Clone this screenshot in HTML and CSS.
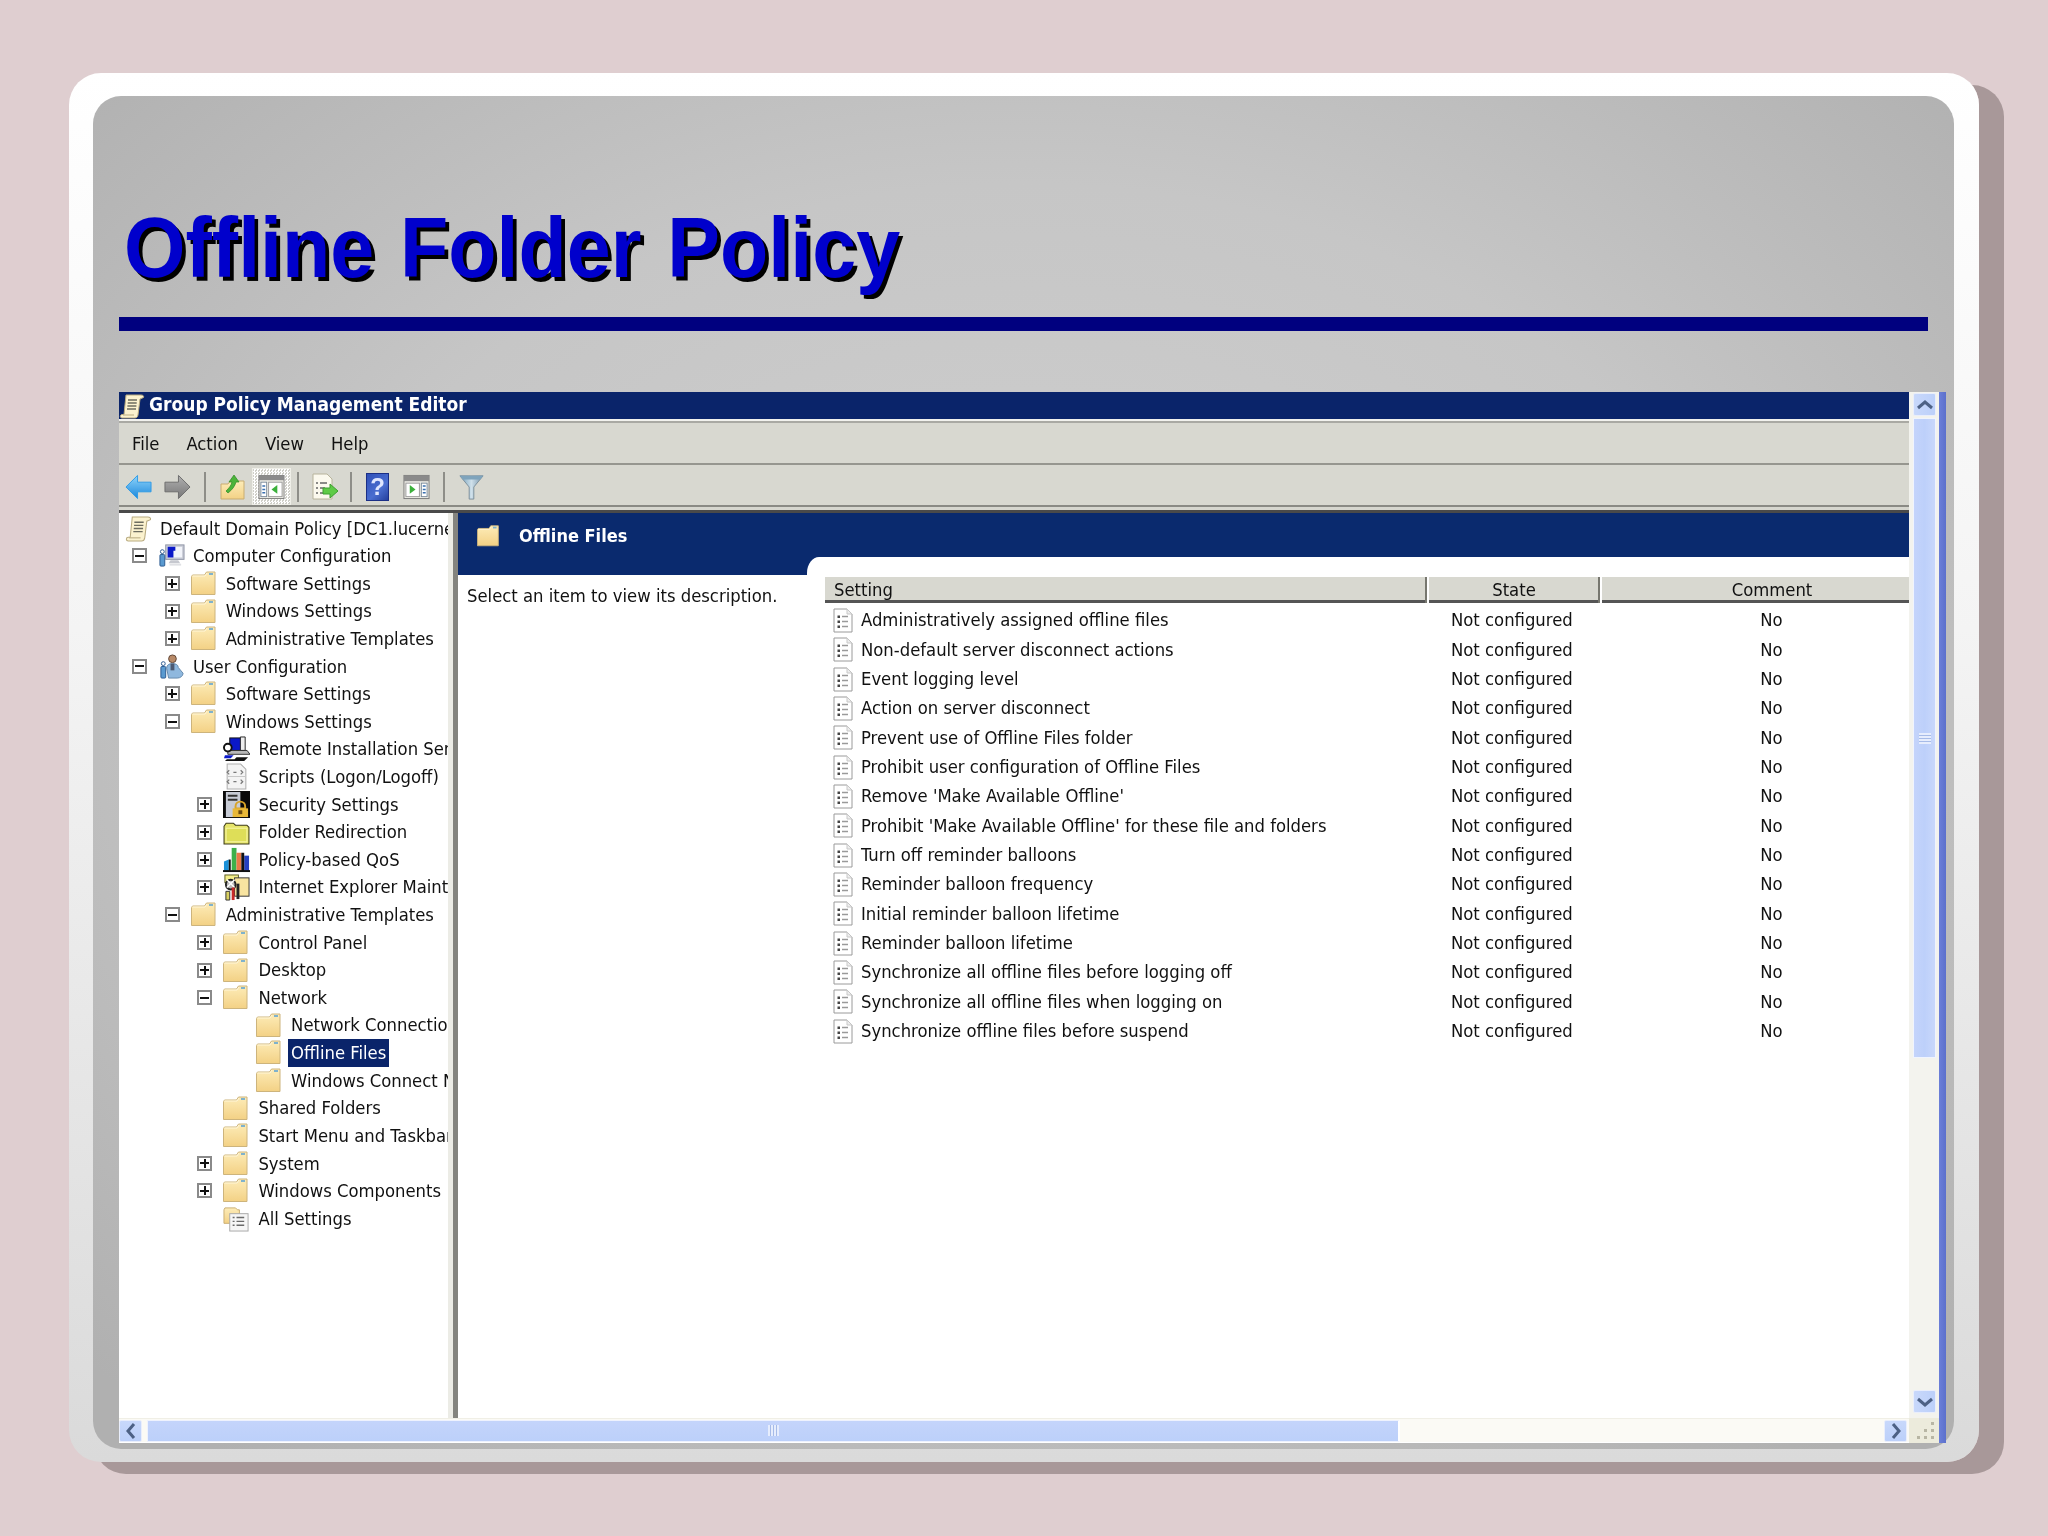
FILE: index.html
```html
<!DOCTYPE html>
<html lang="en">
<head>
<meta charset="utf-8">
<title>Offline Folder Policy</title>
<link rel="stylesheet" href="styles.css">
</head>
<body>
<svg class="defs" width="0" height="0" aria-hidden="true">
  <defs>
    <linearGradient id="fold" x1="0" y1="0" x2="0" y2="1"><stop offset="0" stop-color="#fdecb8"/><stop offset="1" stop-color="#f3d185"/></linearGradient>
    <symbol id="folder" viewBox="0 0 27 27">
      <path d="M.5 6.500 1.500 5h12l2-3h8.500v22.500H.5z" fill="url(#fold)" stroke="#cdb47c" stroke-width="1"/>
      <path d="M1.500 6h12.500l2-3" fill="none" stroke="#fff6d8" stroke-width="1"/>
      <rect x="18" y="3" width="4" height="2" fill="#7fb2cc"/>
    </symbol>
    <symbol id="scroll" viewBox="0 0 26 26">
      <path d="M7 2h15c2 0 3 1 2.500 2.500L21 6l-2 16c-.3 2-1.500 3-3 3H3c-2 0-2.500-3 0-3.500h2z" fill="#fbf2cf" stroke="#b9ab80" stroke-width="1"/>
      <path d="M9 7h9M8.700 10h9M8.400 13h9M8 16h9" stroke="#6c6c60" stroke-width="1.300"/>
      <path d="M4 22h11" stroke="#b9ab80"/>
    </symbol>
    <symbol id="computer" viewBox="0 0 28 24">
      <rect x="8" y="1" width="19" height="15" fill="#c9ccd6" stroke="#8f95a6"/>
      <rect x="10" y="3" width="15" height="11" fill="#f2f4fa"/>
      <path d="M10 3h8v4h-2v7h-6z" fill="#0a18c8"/>
      <path d="M13 17h8l2 3H11z" fill="#c6c8cf"/>
      <path d="M12 20.500h12v2H12z" fill="#dfe0e4"/>
      <rect x="2" y="11" width="5" height="12" rx="1" fill="#5a9ad0" stroke="#2c5a90"/>
      <circle cx="4.500" cy="8" r="2" fill="#fff" stroke="#2c5a90"/>
    </symbol>
    <symbol id="user" viewBox="0 0 28 26">
      <circle cx="15" cy="5" r="4" fill="#b88a68" stroke="#5f4534"/>
      <path d="M9 15c0-4 3-5 6-5s6 1 6 4l5 6c0 3-3 5-6 5H11z" fill="#8fb8de" stroke="#6488ac"/>
      <rect x="13" y="10" width="4" height="7" fill="#4c5a72"/>
      <rect x="3" y="13" width="5" height="12" rx="1" fill="#5a9ad0" stroke="#2c5a90"/>
      <circle cx="5.500" cy="10" r="2" fill="#fff" stroke="#2c5a90"/>
    </symbol>
    <symbol id="remote" viewBox="0 0 28 28">
      <rect x="7" y="2" width="15" height="13" fill="#0a18c8" stroke="#111"/>
      <path d="M18 1h5v14h-5z" fill="#eee" stroke="#222"/>
      <path d="M5 15h20l3 4H5z" fill="#b8b8b8" stroke="#333"/>
      <circle cx="5" cy="12" r="4" fill="#fff" stroke="#111" stroke-width="2"/>
      <path d="M2 20h9l-3 3H1z" fill="#0a18c8"/>
      <path d="M14 22h12l-4 4H2l2-2h8z" fill="#111"/>
    </symbol>
    <symbol id="script" viewBox="0 0 24 26">
      <path d="M3 1h13l5 5v19H3z" fill="#f4f4f4" stroke="#b0b0b0"/>
      <path d="M5 7l-2 2 2 2M9 9h3M16 7l2 2-2 2M5 16l-2 2 2 2M9 18h3M16 16l2 2-2 2" fill="none" stroke="#7a7a7a" stroke-width="1.200"/>
      <path d="M3 13h18" stroke="#c8c8c8"/>
    </symbol>
    <symbol id="security" viewBox="0 0 28 28">
      <rect x="0" y="0" width="28" height="28" fill="#0a0a0a"/>
      <rect x="3" y="1" width="15" height="26" fill="#c8ccd6"/>
      <path d="M5 5h10M5 9h10" stroke="#333" stroke-width="2"/>
      <path d="M13 16a5 5 0 0 1 10 0v2h-10z" fill="none" stroke="#d8a428" stroke-width="2"/>
      <rect x="10" y="18" width="16" height="9" fill="#e8b838"/>
      <rect x="16" y="20" width="4" height="4" fill="#6b4a10"/>
    </symbol>
    <symbol id="redir" viewBox="0 0 26 24">
      <path d="M1 6l2-3h7l2 2h11l2 2v16H1z" fill="#e6e46a" stroke="#3c3a18" stroke-width="1"/>
      <path d="M3 8h20v13H3z" fill="#dede58" stroke="#f6f5a0"/>
    </symbol>
    <symbol id="qos" viewBox="0 0 28 26">
      <path d="M1 15l5-2v12H1z" fill="#1a90d8"/>
      <rect x="9" y="1" width="5" height="24" fill="#3db04a"/>
      <rect x="14" y="6" width="5" height="19" fill="#ea7a48"/>
      <rect x="22" y="9" width="5" height="16" fill="#2440c0"/>
      <path d="M6 13h2v12H6zM19 6h3v19h-3z" fill="#111"/>
      <path d="M0 25h28" stroke="#111" stroke-width="2"/>
    </symbol>
    <symbol id="ie" viewBox="0 0 28 28">
      <rect x="2" y="1" width="14" height="8" fill="#f4ee8a" stroke="#5a5a20"/>
      <rect x="12" y="4" width="15" height="19" fill="#f8e4a0" stroke="#333"/>
      <circle cx="8" cy="11" r="5" fill="#bbb" stroke="#222" stroke-width="2"/>
      <path d="M4 6l8 8M4 14l8-8" stroke="#fff" stroke-width="1.500"/>
      <path d="M9 14h3v13H9z" fill="#c82828"/>
      <path d="M14 10h3v16h-3z" fill="#222"/>
      <path d="M3 18h4v9H3z" fill="#d8d060" stroke="#333"/>
    </symbol>
    <symbol id="allset" viewBox="0 0 28 28">
      <path d="M1 5l1-2h11l2 2h2v14H1z" fill="url(#fold)" stroke="#c9ad70"/>
      <rect x="7" y="9" width="19" height="18" fill="#f6f6f6" stroke="#a8a8a8"/>
      <path d="M10 13h2M14 13h8M10 17h2M14 17h8M10 21h2M14 21h8" stroke="#6a6a6a" stroke-width="1.500"/>
    </symbol>
    <symbol id="policy" viewBox="0 0 20 26">
      <path d="M1 2h13l5 5v18H1z" fill="#fff" stroke="#9a9a9a" stroke-width="1"/>
      <path d="M14 2v5h5" fill="#eee" stroke="#c8c8c8"/>
      <path d="M4.500 8.500h2.500v2.500H4.500zM4.500 13.500h2.500v2.500H4.500zM4.500 18.500h2.500v2.500H4.500z" fill="#444"/>
      <path d="M9 9.500h6M9 14.500h6M9 19.500h6" stroke="#9a9a9a" stroke-width="1.500"/>
    </symbol>
    <linearGradient id="blueArrow" x1="0" y1="0" x2="0" y2="1"><stop offset="0" stop-color="#8fd4fa"/><stop offset="1" stop-color="#1c88dc"/></linearGradient>
    <linearGradient id="grayArrow" x1="0" y1="0" x2="0" y2="1"><stop offset="0" stop-color="#b0b0b0"/><stop offset="1" stop-color="#777"/></linearGradient>
    <symbol id="back" viewBox="0 0 28 26">
      <path d="M1 13 13 1v7h14v10H13v7z" fill="url(#blueArrow)" stroke="#2f9be6"/>
    </symbol>
    <symbol id="forward" viewBox="0 0 28 26">
      <path d="M27 13 15 1v7H1v10h14v7z" fill="url(#grayArrow)" stroke="#6c6c6c"/>
    </symbol>
    <symbol id="up" viewBox="0 0 26 26">
      <path d="M1 10h7l2-3h14v18H1z" fill="url(#fold)" stroke="#c9ad70"/>
      <path d="M6 17c3-3 5-5 6-9l-3 0 5-7 5 7-3 0c-1 4-4 8-8 11z" fill="#4db43a" stroke="#2e8a24" stroke-width=".7"/>
    </symbol>
    <symbol id="tree" viewBox="0 0 28 26">
      <rect x="1" y="1" width="26" height="24" fill="#f0efe8" stroke="#7a7a7a"/>
      <rect x="1" y="1" width="26" height="5" fill="#8a8a8a"/>
      <rect x="3" y="8" width="6" height="15" fill="#fff" stroke="#7a8a9a"/>
      <path d="M4.500 12h3M4.500 15.500h3M4.500 19h3" stroke="#3a70b0" stroke-width="1.500"/>
      <rect x="11" y="8" width="14" height="15" fill="#fff" stroke="#9a9a9a"/>
      <path d="M20 11v9l-6-4.500z" fill="#3cb03c"/>
    </symbol>
    <symbol id="export" viewBox="0 0 28 28">
      <path d="M2 1h14l5 5v20H2z" fill="#fbf9ee" stroke="#b8b49c"/>
      <path d="M5 10h2M9 10h7M5 15h2M9 15h5M5 20h2M9 20h5" stroke="#666" stroke-width="1.500"/>
      <path d="M27 18l-8-7v4h-7v6h7v4z" fill="#5ecb46" stroke="#3d9f30"/>
    </symbol>
    <symbol id="action" viewBox="0 0 28 26">
      <rect x="1" y="1" width="26" height="24" fill="#f0efe8" stroke="#7a7a7a"/>
      <rect x="1" y="1" width="26" height="6" fill="#8a8a8a"/>
      <rect x="3" y="9" width="14" height="14" fill="#fff" stroke="#9a9a9a"/>
      <path d="M7 11v9l6-4.500z" fill="#3cb03c"/>
      <rect x="19" y="9" width="6" height="14" fill="#fff" stroke="#7a8a9a"/>
      <path d="M20.500 12h3M20.500 15.500h3M20.500 19h3" stroke="#3a70b0" stroke-width="1.500"/>
    </symbol>
    <linearGradient id="fun" x1="0" y1="0" x2="1" y2="0"><stop offset="0" stop-color="#6f9cb8"/><stop offset=".5" stop-color="#cfe0ea"/><stop offset="1" stop-color="#6f8ea6"/></linearGradient>
    <symbol id="filter" viewBox="0 0 27 28">
      <path d="M1 2h25L16 14v13h-5V14z" fill="url(#fun)" stroke="#7a8c98"/>
      <path d="M1 2h25l-3 4H4z" fill="#7fa4bc"/>
    </symbol>
    <symbol id="grip" viewBox="0 0 22 20">
      <path d="M17 0h3v3h-3zM10 7h3v3h-3zM17 7h3v3h-3zM3 14h3v3H3zM10 14h3v3h-3zM17 14h3v3h-3z" fill="#b8b6a4"/>
    </symbol>
  </defs>
</svg>

<main class="card">
  <section class="panel">
    <h1 class="title">Offline Folder Policy</h1>
    <div class="rule"></div>

    <div class="window">
      <div class="app">
        <div class="titlebar">
          <svg class="tb-icon"><use href="#scroll"/></svg>
          <span>Group Policy Management Editor</span>
        </div>
        <nav class="menu"><span>File</span><span>Action</span><span>View</span><span>Help</span></nav>
        <div class="toolbar">
          <span class="tool"><svg class="t27"><use href="#back"/></svg></span>
          <span class="tool"><svg class="t27"><use href="#forward"/></svg></span>
          <span class="sep sep-wide"></span>
          <span class="tool"><svg class="t26"><use href="#up"/></svg></span>
          <span class="tool tool-on"><svg class="t27"><use href="#tree"/></svg></span>
          <span class="sep"></span>
          <span class="tool"><svg class="t28"><use href="#export"/></svg></span>
          <span class="sep"></span>
          <span class="tool"><span class="help-btn">?</span></span>
          <span class="tool"><svg class="t27"><use href="#action"/></svg></span>
          <span class="sep sep-wide"></span>
          <span class="tool"><svg class="t27"><use href="#filter"/></svg></span>
        </div>
        <div class="bands"></div>

        <div class="panes">
          <div class="tree">
            <div class="node l0"><svg class="ico"><use href="#scroll"/></svg><span class="label">Default Domain Policy [DC1.lucerne.local]</span></div>
            <div class="node l1"><i class="box minus"></i><svg class="ico"><use href="#computer"/></svg><span class="label">Computer Configuration</span></div>
            <div class="node l2"><i class="box plus"></i><svg class="ico"><use href="#folder"/></svg><span class="label">Software Settings</span></div>
            <div class="node l2"><i class="box plus"></i><svg class="ico"><use href="#folder"/></svg><span class="label">Windows Settings</span></div>
            <div class="node l2"><i class="box plus"></i><svg class="ico"><use href="#folder"/></svg><span class="label">Administrative Templates</span></div>
            <div class="node l1"><i class="box minus"></i><svg class="ico"><use href="#user"/></svg><span class="label">User Configuration</span></div>
            <div class="node l2"><i class="box plus"></i><svg class="ico"><use href="#folder"/></svg><span class="label">Software Settings</span></div>
            <div class="node l2"><i class="box minus"></i><svg class="ico"><use href="#folder"/></svg><span class="label">Windows Settings</span></div>
            <div class="node l3"><i class="box none"></i><svg class="ico"><use href="#remote"/></svg><span class="label">Remote Installation Services</span></div>
            <div class="node l3"><i class="box none"></i><svg class="ico"><use href="#script"/></svg><span class="label">Scripts (Logon/Logoff)</span></div>
            <div class="node l3"><i class="box plus"></i><svg class="ico"><use href="#security"/></svg><span class="label">Security Settings</span></div>
            <div class="node l3"><i class="box plus"></i><svg class="ico"><use href="#redir"/></svg><span class="label">Folder Redirection</span></div>
            <div class="node l3"><i class="box plus"></i><svg class="ico"><use href="#qos"/></svg><span class="label">Policy-based QoS</span></div>
            <div class="node l3"><i class="box plus"></i><svg class="ico"><use href="#ie"/></svg><span class="label">Internet Explorer Maintenance</span></div>
            <div class="node l2"><i class="box minus"></i><svg class="ico"><use href="#folder"/></svg><span class="label">Administrative Templates</span></div>
            <div class="node l3"><i class="box plus"></i><svg class="ico"><use href="#folder"/></svg><span class="label">Control Panel</span></div>
            <div class="node l3"><i class="box plus"></i><svg class="ico"><use href="#folder"/></svg><span class="label">Desktop</span></div>
            <div class="node l3"><i class="box minus"></i><svg class="ico"><use href="#folder"/></svg><span class="label">Network</span></div>
            <div class="node l4"><i class="box none"></i><svg class="ico"><use href="#folder"/></svg><span class="label">Network Connections</span></div>
            <div class="node l4"><i class="box none"></i><svg class="ico"><use href="#folder"/></svg><span class="label selected">Offline Files</span></div>
            <div class="node l4"><i class="box none"></i><svg class="ico"><use href="#folder"/></svg><span class="label">Windows Connect Now</span></div>
            <div class="node l3"><i class="box none"></i><svg class="ico"><use href="#folder"/></svg><span class="label">Shared Folders</span></div>
            <div class="node l3"><i class="box none"></i><svg class="ico"><use href="#folder"/></svg><span class="label">Start Menu and Taskbar</span></div>
            <div class="node l3"><i class="box plus"></i><svg class="ico"><use href="#folder"/></svg><span class="label">System</span></div>
            <div class="node l3"><i class="box plus"></i><svg class="ico"><use href="#folder"/></svg><span class="label">Windows Components</span></div>
            <div class="node l3"><i class="box none"></i><svg class="ico"><use href="#allset"/></svg><span class="label">All Settings</span></div>
          </div>
          <div class="splitter"></div>
          <div class="detail">
            <div class="detail-head">
              <svg class="head-icon"><use href="#folder"/></svg>
              <span>Offline Files</span>
            </div>
            <div class="detail-body">
              <p class="desc">Select an item to view its description.</p>
              <div class="list">
                <div class="cols"><span class="c-set">Setting</span><span class="c-state">State</span><span class="c-com">Comment</span></div>
                <div class="rows">
                  <div class="row"><span class="r-set"><svg class="doc"><use href="#policy"/></svg>Administratively assigned offline files</span><span class="r-state">Not configured</span><span class="r-com">No</span></div>
                  <div class="row"><span class="r-set"><svg class="doc"><use href="#policy"/></svg>Non-default server disconnect actions</span><span class="r-state">Not configured</span><span class="r-com">No</span></div>
                  <div class="row"><span class="r-set"><svg class="doc"><use href="#policy"/></svg>Event logging level</span><span class="r-state">Not configured</span><span class="r-com">No</span></div>
                  <div class="row"><span class="r-set"><svg class="doc"><use href="#policy"/></svg>Action on server disconnect</span><span class="r-state">Not configured</span><span class="r-com">No</span></div>
                  <div class="row"><span class="r-set"><svg class="doc"><use href="#policy"/></svg>Prevent use of Offline Files folder</span><span class="r-state">Not configured</span><span class="r-com">No</span></div>
                  <div class="row"><span class="r-set"><svg class="doc"><use href="#policy"/></svg>Prohibit user configuration of Offline Files</span><span class="r-state">Not configured</span><span class="r-com">No</span></div>
                  <div class="row"><span class="r-set"><svg class="doc"><use href="#policy"/></svg>Remove 'Make Available Offline'</span><span class="r-state">Not configured</span><span class="r-com">No</span></div>
                  <div class="row"><span class="r-set"><svg class="doc"><use href="#policy"/></svg>Prohibit 'Make Available Offline' for these file and folders</span><span class="r-state">Not configured</span><span class="r-com">No</span></div>
                  <div class="row"><span class="r-set"><svg class="doc"><use href="#policy"/></svg>Turn off reminder balloons</span><span class="r-state">Not configured</span><span class="r-com">No</span></div>
                  <div class="row"><span class="r-set"><svg class="doc"><use href="#policy"/></svg>Reminder balloon frequency</span><span class="r-state">Not configured</span><span class="r-com">No</span></div>
                  <div class="row"><span class="r-set"><svg class="doc"><use href="#policy"/></svg>Initial reminder balloon lifetime</span><span class="r-state">Not configured</span><span class="r-com">No</span></div>
                  <div class="row"><span class="r-set"><svg class="doc"><use href="#policy"/></svg>Reminder balloon lifetime</span><span class="r-state">Not configured</span><span class="r-com">No</span></div>
                  <div class="row"><span class="r-set"><svg class="doc"><use href="#policy"/></svg>Synchronize all offline files before logging off</span><span class="r-state">Not configured</span><span class="r-com">No</span></div>
                  <div class="row"><span class="r-set"><svg class="doc"><use href="#policy"/></svg>Synchronize all offline files when logging on</span><span class="r-state">Not configured</span><span class="r-com">No</span></div>
                  <div class="row"><span class="r-set"><svg class="doc"><use href="#policy"/></svg>Synchronize offline files before suspend</span><span class="r-state">Not configured</span><span class="r-com">No</span></div>
                </div>
              </div>
            </div>
          </div>
        </div>
      </div>

      <div class="vscroll">
        <span class="sbtn sbtn-up"><svg viewBox="0 0 16 10" class="chev"><path d="M1 8l7-6 7 6" fill="none" stroke="#4d6185" stroke-width="3"/></svg></span>
        <span class="vthumb"><i class="vgrip"></i></span>
        <span class="vtrack"></span>
        <span class="sbtn sbtn-down"><svg viewBox="0 0 16 10" class="chev"><path d="M1 2l7 6 7-6" fill="none" stroke="#4d6185" stroke-width="3"/></svg></span>
      </div>
      <div class="strip"></div>

      <div class="hscroll">
        <span class="hbtn"><svg viewBox="0 0 10 16" class="chev-h"><path d="M8 1 2 8l6 7" fill="none" stroke="#4d6185" stroke-width="3"/></svg></span>
        <span class="hthumb"><i class="hgrip"></i></span>
        <span class="htrack"></span>
        <span class="hbtn hbtn-right"><svg viewBox="0 0 10 16" class="chev-h"><path d="M2 1l6 7-6 7" fill="none" stroke="#4d6185" stroke-width="3"/></svg></span>
      </div>
      <div class="corner"><svg class="grip"><use href="#grip"/></svg></div>
    </div>
  </section>
</main>
</body>
</html>
```

FILE: styles.css
```css
* { box-sizing: border-box; }

html, body {
  margin: 0;
  height: 1536px;
  overflow: hidden;
}

body {
  background: #dfced0;
  font-family: "DejaVu Sans Condensed", "DejaVu Sans", sans-serif;
  font-stretch: condensed;
  font-size: 18.3px;
  color: #111;
  padding: 73px 0 0 69px;
}

.defs { display: block; height: 0; }

.card {
  width: 1910px;
  height: 1389px;
  padding: 23px 25px 13px 24px;
  border-radius: 32px;
  background: linear-gradient(180deg, #ffffff 0%, #f4f4f4 40%, #dadada 100%);
  box-shadow: 25px 12px 0 #a89899;
}

.panel {
  height: 1353px;
  padding: 106px 8px 0 26px;
  border-radius: 28px;
  background:
    radial-gradient(ellipse 70% 70% at 50% 45%, #d0d0d0 0%, #c6c6c6 55%, #b0b0b0 100%);
}

.title {
  margin: 0;
  height: 92px;
  padding-left: 5px;
  font-family: "Liberation Sans", Arial, sans-serif;
  font-stretch: normal;
  font-size: 85px;
  line-height: 92px;
  font-weight: 700;
  word-spacing: 4px;
  color: #0000cc;
  text-shadow: 4px 4px 0 #000;
  white-space: nowrap;
  transform: scaleX(.93);
  transform-origin: 5px 0;
}

.rule {
  width: 1809px;
  height: 14px;
  margin: 23px 0 61px;
  background: #00007f;
}

.window {
  display: grid;
  grid-template-columns: 1790px 30px 7px;
  grid-template-rows: 1026px 25px;
  height: 1051px;
  filter: blur(0.4px);
}

.app {
  display: flex;
  flex-direction: column;
  min-width: 0;
  overflow: hidden;
}

.titlebar {
  display: flex;
  align-items: center;
  flex: none;
  height: 31px;
  padding-bottom: 8px;
  background: linear-gradient(#0a246a 0 27px, #f2f2ee 27px 29px, #a9a9a3 29px 31px);
  color: #fff;
  font-weight: 700;
  font-size: 19px;
}

.tb-icon { width: 26px; height: 26px; margin: 4px 4px 0 0; flex: none; }

.menu {
  display: flex;
  align-items: center;
  gap: 27px;
  flex: none;
  height: 42px;
  padding-left: 13px;
  background: #d8d8d0;
  border-bottom: 2px solid #96968f;
}

.toolbar {
  display: flex;
  align-items: center;
  flex: none;
  height: 40px;
  padding-top: 3px;
  background: #d8d8d0;
}

.tool {
  display: flex;
  align-items: center;
  justify-content: center;
  flex: none;
  width: 39px;
  height: 37px;
}

.tool-on {
  background: repeating-conic-gradient(#ffffff 0 25%, #cfcfc8 0 50%) 0 0 / 3px 3px;
  border: 1px solid #efefe8;
}

.t26 { width: 26px; height: 26px; }
.t27 { width: 27px; height: 26px; }
.t28 { width: 28px; height: 28px; }

.sep {
  flex: none;
  width: 14px;
  height: 30px;
  background: linear-gradient(#8e8e88, #8e8e88) center / 2px 100% no-repeat;
}
.sep-wide { width: 16px; }

.help-btn {
  display: flex;
  align-items: center;
  justify-content: center;
  width: 23px;
  height: 28px;
  background: linear-gradient(135deg, #2f4fb8, #4a6ed0 60%, #24409e);
  border: 1px solid #1b2f86;
  color: #dfe6ff;
  font-family: "Liberation Sans", Arial, sans-serif;
  font-stretch: normal;
  font-weight: 700;
  font-size: 24px;
}

.bands {
  flex: none;
  height: 8px;
  background: linear-gradient(#8a8a84 0 2px, #d6d6ce 2px 5px, #4a4a4a 5px 8px);
}

.panes {
  display: flex;
  flex: 1;
  min-height: 0;
}

.tree {
  flex: none;
  width: 329px;
  padding-top: 1.5px;
  overflow: hidden;
  background: #fff;
}

.node {
  display: flex;
  align-items: center;
  height: 27.62px;
  white-space: nowrap;
}

.l0 { padding-left: 6px; }
.l1 { padding-left: 13px; }
.l2 { padding-left: 45.7px; }
.l3 { padding-left: 78.4px; }
.l4 { padding-left: 111.1px; }

.box {
  display: block;
  flex: none;
  width: 15px;
  height: 15px;
  margin-right: 11px;
  border: 2px solid #8a8a8a;
  background:
    linear-gradient(#111, #111) center / 9px 2px no-repeat,
    #fff;
}
.plus {
  background:
    linear-gradient(#111, #111) center / 9px 2px no-repeat,
    linear-gradient(#111, #111) center / 2px 9px no-repeat,
    #fff;
}
.none { border-color: transparent; background: none; }

.ico {
  flex: none;
  width: 27px;
  height: 27px;
  margin-right: 5px;
}

.label {
  padding: 0 3px;
  line-height: 27.62px;
}

.selected {
  background: #0a246a;
  color: #fff;
}

.splitter {
  flex: none;
  width: 10px;
  background: linear-gradient(90deg, #ecece6 0 5px, #84847f 5px 10px);
}

.detail {
  display: flex;
  flex-direction: column;
  flex: 1;
  min-width: 0;
  background: #fff;
}

.detail-head {
  display: flex;
  align-items: flex-start;
  flex: none;
  height: 62px;
  padding: 11px 0 0 19px;
  background: #0a2a6e;
  color: #fff;
  font-weight: 700;
  font-size: 18px;
  line-height: 24px;
}

.head-icon { width: 24px; height: 24px; margin-right: 18px; flex: none; }

.detail-body {
  display: flex;
  flex: 1;
  min-height: 0;
}

.desc {
  flex: none;
  width: 349px;
  margin: 0;
  padding: 11px 0 0 9px;
  line-height: 20px;
  white-space: nowrap;
}

.list {
  flex: 1;
  min-width: 0;
  margin-top: -18px;
  padding: 20px 0 0 18px;
  background: #fff;
  border-top-left-radius: 12px 16px;
}

.cols, .row {
  display: grid;
  grid-template-columns: 600px 173px 311px;
}

.cols {
  height: 26px;
  background: #d8d8d0;
  border-bottom: 3px solid #555;
  line-height: 26px;
  white-space: nowrap;
}

.c-set { padding-left: 9px; }
.c-state { text-align: center; border-left: 2px solid #77776f; box-shadow: inset 2px 0 0 #fff; padding-left: 3px; }
.c-com { text-align: center; border-left: 2px solid #77776f; box-shadow: inset 2px 0 0 #fff; padding-left: 35px; }

.rows { padding-top: 2.33px; }

.row {
  height: 29.33px;
  align-items: center;
  white-space: nowrap;
}

.r-set {
  display: flex;
  align-items: center;
  padding-left: 8px;
}

.doc {
  flex: none;
  width: 20px;
  height: 26px;
  margin-right: 8px;
}

.r-state { padding-left: 26px; }
.r-com { text-align: center; padding-left: 36px; }

.vscroll {
  display: flex;
  flex-direction: column;
  padding: 1px 3px 5px 4px;
  background: #f3f3ee;
}

.sbtn {
  display: flex;
  align-items: center;
  justify-content: center;
  flex: none;
  height: 23px;
  background: linear-gradient(90deg, #c8d8fb, #bcd0fa);
  border: 1px solid #e9eefc;
  border-radius: 2px;
}

.chev { width: 16px; height: 10px; }

.vthumb {
  display: flex;
  align-items: center;
  justify-content: center;
  flex: none;
  height: 640px;
  margin-top: 2px;
  background: linear-gradient(90deg, #c4d4fb, #bdd0fa 50%, #c9d8fb);
  border: 1px solid #f0f4fe;
}

.vgrip {
  display: block;
  width: 12px;
  height: 11px;
  background: repeating-linear-gradient(#e6edfd 0 2px, #a6bbe8 2px 3px);
}

.vtrack { flex: 1; }

.strip {
  grid-row: 1 / span 2;
  grid-column: 3;
  background: linear-gradient(90deg, #6b7fd8, #5c70cc);
}

.hscroll {
  display: flex;
  align-items: center;
  padding: 1px 2px 1px 0;
  background: #fbfaf5;
  border-top: 1px solid #f0efe6;
  border-bottom: 1px solid #fff;
}

.hbtn {
  display: flex;
  align-items: center;
  justify-content: center;
  flex: none;
  width: 23px;
  height: 22px;
  background: linear-gradient(#c8d8fb, #bcd0fa);
  border: 1px solid #e9eefc;
  border-radius: 2px;
}

.chev-h { width: 10px; height: 16px; }

.hthumb {
  display: flex;
  align-items: center;
  justify-content: center;
  flex: none;
  width: 1253px;
  height: 22px;
  margin-left: 5px;
  background: linear-gradient(#c4d4fb, #bcd0fa);
  border: 1px solid #eef2fe;
  border-right: 2px solid #fff;
}

.hgrip {
  display: block;
  width: 11px;
  height: 11px;
  background: repeating-linear-gradient(90deg, #e6edfd 0 2px, #a6bbe8 2px 3px);
}

.htrack { flex: 1; }

.corner {
  display: flex;
  align-items: flex-end;
  justify-content: flex-end;
  padding: 0 3px 1px 0;
  background: #ecebdc;
}

.grip { width: 22px; height: 20px; }
```
